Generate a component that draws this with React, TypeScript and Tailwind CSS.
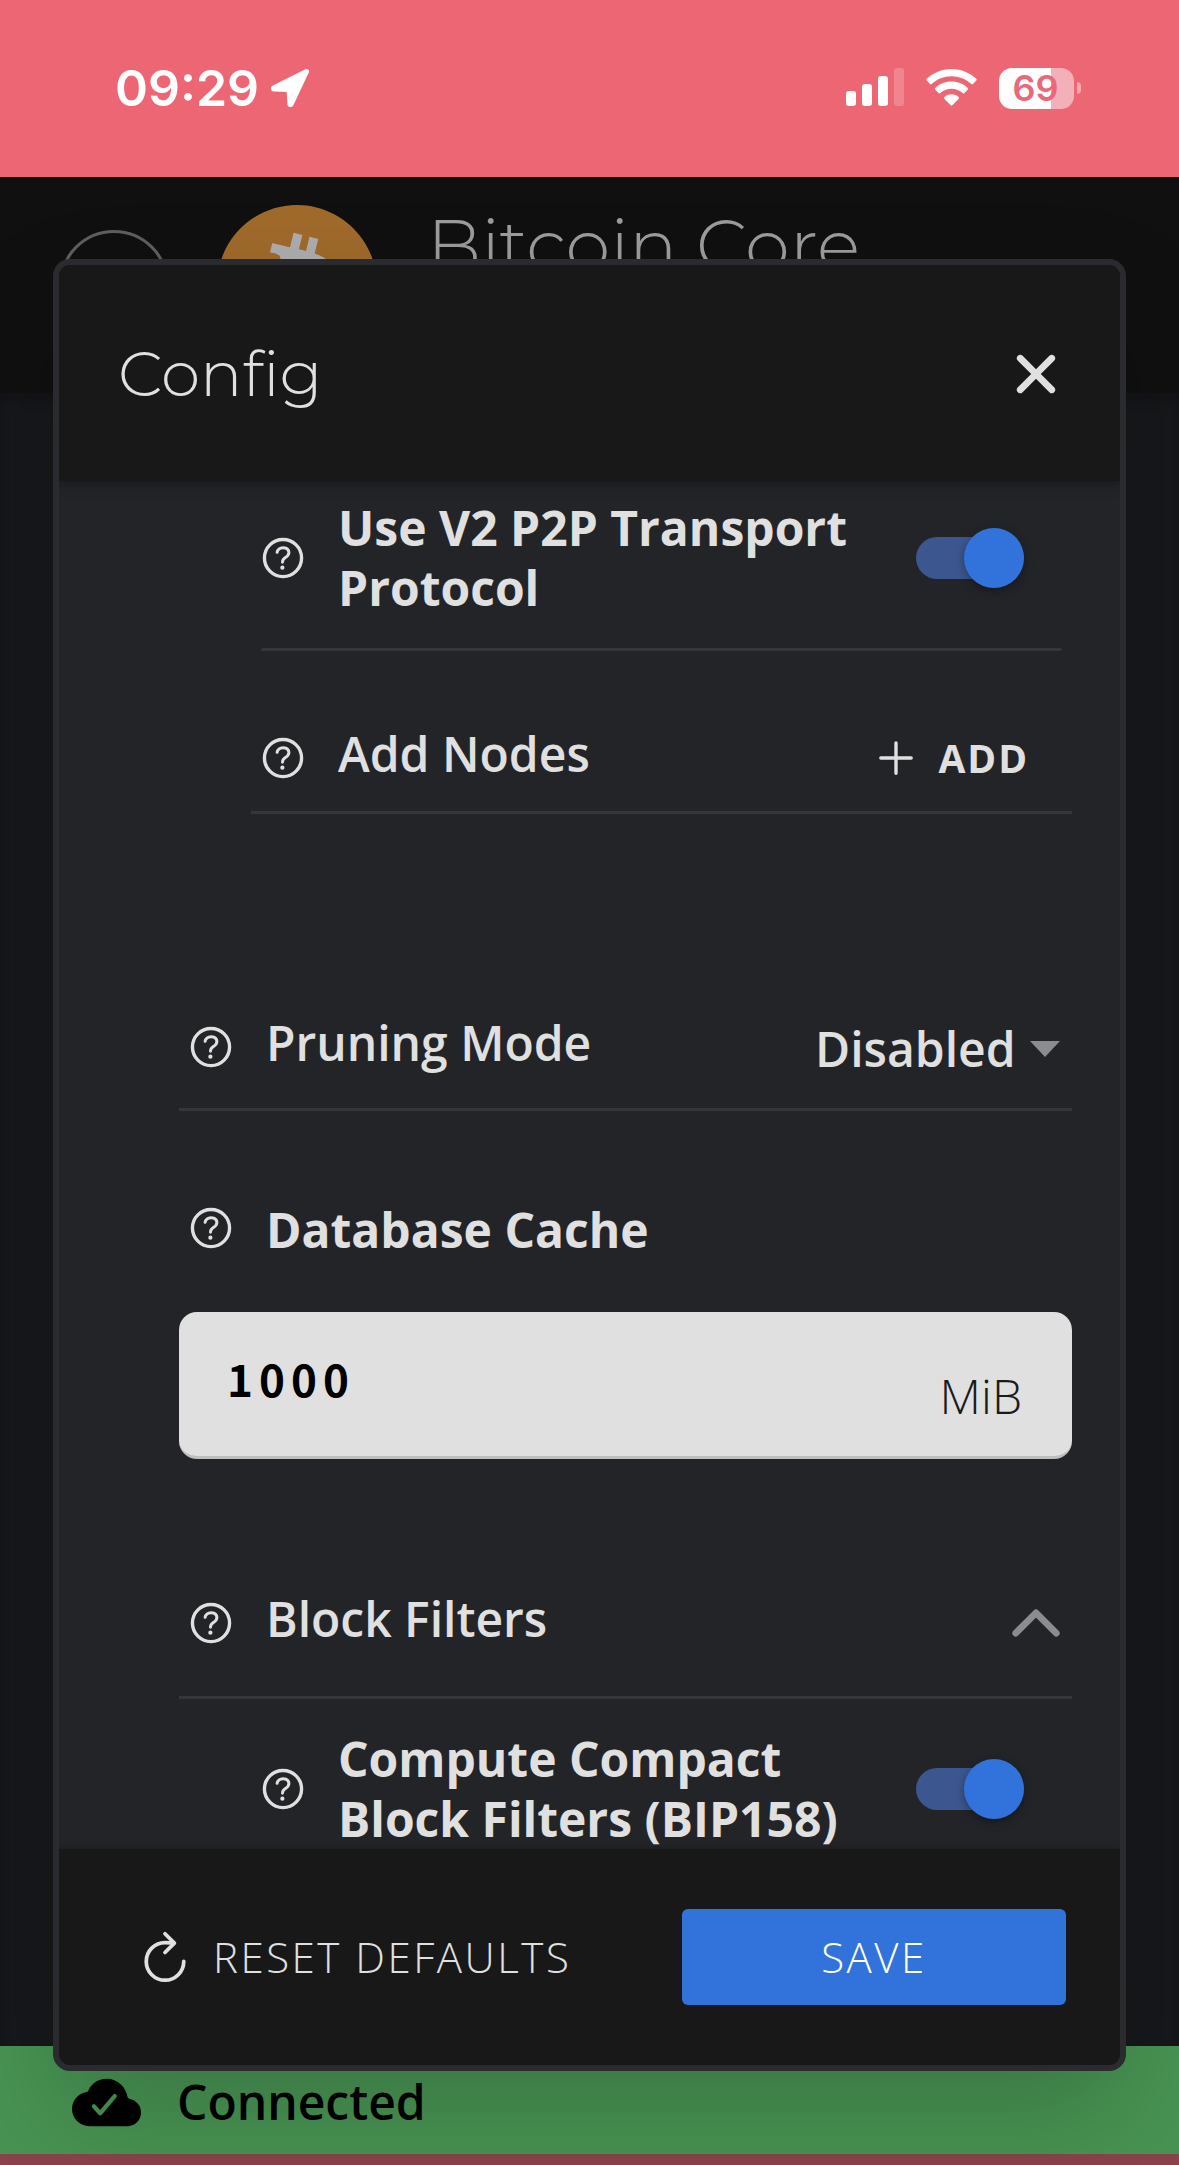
import { useState, type ReactNode } from "react";
import {
  IoAdd,
  IoChevronUp,
  IoClose,
  IoCloudDone,
  IoHelpCircleOutline,
  IoRefreshOutline,
} from "react-icons/io5";
import { SiBitcoin } from "react-icons/si";

function StatusBar() {
  return (
    <div className="flex h-[177px] shrink-0 items-start justify-between bg-[#ed6673] pt-[60px] pr-[98px] pl-[115px] text-white">
      <div className="flex h-14 items-center gap-[11px]">
        <span className="font-['Inter',sans-serif] text-[50px] leading-[56px] font-semibold">09:29</span>
        <svg className="size-10" viewBox="0 0 40 40" fill="currentColor" stroke="currentColor" strokeWidth="5" strokeLinejoin="round" aria-hidden="true">
          <path d="M36.500 3.500 L3.500 20 L3.500 21 L19 21.500 L20 36.500 L21 36.500 Z" />
        </svg>
      </div>
      <div className="flex h-14 items-center gap-[22px]">
        <svg className="h-10 w-[58px]" viewBox="0 0 58 40" fill="currentColor" aria-hidden="true">
          <rect x="0" y="23" width="10" height="15" rx="3" />
          <rect x="16" y="16" width="10" height="22" rx="3" />
          <rect x="32" y="8" width="10" height="30" rx="3" />
          <rect x="48" y="0" width="10" height="38" rx="3" opacity="0.2" />
        </svg>
        <svg className="h-10 w-[51px]" viewBox="0 0 51 40" fill="currentColor" aria-hidden="true">
          <path d="M25.500 1 C35.500 1 44 5 50.300 10.800 Q51.200 11.700 50.300 12.600 L47 15.900 Q46.200 16.700 45.300 15.900 C40 11 33 8.200 25.500 8.200 C18 8.200 11 11 5.700 15.900 Q4.800 16.700 4 15.900 L.7 12.600 Q-.2 11.700 .7 10.800 C7 5 15.500 1 25.500 1Z" />
          <path d="M25.500 13.500 C31.800 13.500 37.500 15.900 41.800 19.900 Q42.700 20.700 41.800 21.600 L38.400 25 Q37.600 25.800 36.700 25 C33.700 22.300 29.800 20.700 25.500 20.700 C21.200 20.700 17.300 22.300 14.300 25 Q13.400 25.800 12.600 25 L9.200 21.600 Q8.300 20.700 9.200 19.900 C13.500 15.900 19.200 13.500 25.500 13.500Z" />
          <path d="M25.500 26.300 C28.300 26.300 30.800 27.300 32.700 29 Q33.600 29.800 32.700 30.700 L26.300 37.300 Q25.500 38.100 24.700 37.300 L18.300 30.700 Q17.400 29.800 18.300 29 C20.200 27.300 22.700 26.300 25.500 26.300Z" />
        </svg>
        <div className="flex items-center gap-[3px]">
          <div className="flex h-[41px] w-[75px] items-center justify-center rounded-[13px] bg-linear-to-r from-white from-69% to-[#f3b0b8] to-69% pr-0.5 font-['Inter',sans-serif] text-[36px] leading-none font-semibold text-[#e8697a]">
            69
          </div>
          <div className="h-3 w-1 rounded-r-full bg-[#f5a8b0]" />
        </div>
      </div>
    </div>
  );
}

function AppHeader() {
  return (
    <header className="flex h-[216px] shrink-0 items-center bg-[#101010] pl-[59px]">
      <div className="size-[110px] rounded-full border-[3px] border-[#5f5f5f]" />
      <div className="ml-12 grid size-40 place-items-center">
        <div className="col-start-1 row-start-1 size-32 rounded-full bg-[#adadad]" />
        <SiBitcoin className="col-start-1 row-start-1 size-40 text-[#a06a2b]" />
      </div>
      <h1 className="ml-[50px] pb-20 font-['Montserrat','Lato',sans-serif] text-[72px] leading-[76px] font-light text-[#9c9c9c]">
        Bitcoin Core
      </h1>
    </header>
  );
}

function Help({ topic }: { topic: string }) {
  return (
    <button type="button" aria-label={`About ${topic}`} className="shrink-0">
      <IoHelpCircleOutline className="size-[54px]" />
    </button>
  );
}

function Divider() {
  return <div className="h-[3px] bg-[#353638]" />;
}

function ToggleRow({ id, label }: { id: string; label: string }) {
  const [on, setOn] = useState(true);
  return (
    <div className="pl-[72px]">
      <div className="flex items-center pt-[30px] pr-12 pb-[30px] pl-[5px]">
        <Help topic={label} />
        <label htmlFor={id} className="ml-7 flex-1 font-bold">
          {label}
        </label>
        <input
          id={id}
          type="checkbox"
          role="switch"
          checked={on}
          onChange={(e) => setOn(e.target.checked)}
          className="ml-6 flex h-[42px] w-[108px] shrink-0 appearance-none items-center rounded-full bg-[#55575c] before:size-[60px] before:shrink-0 before:rounded-full before:bg-[#a0a2a6] before:shadow-[0_3px_10px_rgba(0,0,0,0.35)] checked:justify-end checked:bg-[#3c578f] checked:before:bg-[#3273db]"
        />
      </div>
      <div className="mx-[10px] h-[3px] rounded-full bg-[#353638]" />
    </div>
  );
}

function Row({ className, children }: { className: string; children: ReactNode }) {
  return <div className={`flex items-center pl-[5px] ${className}`}>{children}</div>;
}

function ConfigDialog() {
  const [cache, setCache] = useState("1000");
  return (
    <section
      role="dialog"
      aria-labelledby="config-title"
      className="absolute inset-x-[53px] top-[259px] bottom-[94px] flex flex-col overflow-hidden rounded-[17px] border-[6px] border-[#2a2b2f] bg-[#232428] text-[#e0e0e0] shadow-[0_50px_110px_rgba(0,0,0,0.18)]"
    >
      <header className="z-10 flex h-[216px] shrink-0 items-center justify-between bg-[#181818] pr-12 pl-[59px] shadow-[0_3px_12px_rgba(0,0,0,0.35)]">
        <h2 id="config-title" className="font-['Montserrat','Lato',sans-serif] text-[63px] leading-none font-light">
          Config
        </h2>
        <button type="button" aria-label="Close" className="pt-0.5">
          <IoClose className="size-[72px]" />
        </button>
      </header>

      <form
        id="config-form"
        className="min-h-0 flex-1 overflow-hidden pr-12 pl-[120px] text-[48px] leading-[60px]"
        onSubmit={(e) => e.preventDefault()}
      >
        <div className="-mt-[13px]">
          <ToggleRow id="v2transport" label="Use V2 P2P Transport Protocol" />
        </div>

        <div className="pt-[54px] pl-[72px]">
          <Row className="h-[106px] pr-[43px]">
            <Help topic="Add Nodes" />
            <span className="ml-7 flex-1 pb-2 font-semibold">Add Nodes</span>
            <button type="button" className="flex items-center gap-4 text-[39px] font-bold tracking-wider">
              <IoAdd className="size-[54px]" />
              ADD
            </button>
          </Row>
          <Divider />
        </div>

        <div className="pt-[172px]">
          <Row className="h-[122px] pr-3">
            <Help topic="Pruning Mode" />
            <label htmlFor="pruning" className="ml-7 flex-1 pb-2 font-semibold">
              Pruning Mode
            </label>
            <div className="flex items-center gap-3.5 pt-1">
              <select id="pruning" className="appearance-none bg-transparent font-semibold" defaultValue="disabled">
                <option value="disabled">Disabled</option>
              </select>
              <svg className="h-4 w-[30px]" viewBox="0 0 30 16" fill="#8b8c8f" aria-hidden="true">
                <path d="M0 0 H30 L15 16 Z" />
              </svg>
            </div>
          </Row>
          <Divider />
        </div>

        <div className="pt-[87px]">
          <Row className="h-[60px]">
            <Help topic="Database Cache" />
            <label htmlFor="dbcache" className="ml-7 pt-1 font-bold">
              Database Cache
            </label>
          </Row>
          <div className="mt-[54px] flex h-[147px] items-center rounded-[18px] border-b-[3px] border-[#bdbfbf] bg-[#e0e0e0] pr-[50px] pl-12">
            <input
              id="dbcache"
              inputMode="numeric"
              value={cache}
              onChange={(e) => setCache(e.target.value)}
              className="min-w-0 flex-1 bg-transparent pb-3 font-['Noto_Sans_CJK_SC',sans-serif] text-[44px] font-bold tracking-[6px] text-black outline-none"
            />
            <span className="pt-6 font-light text-[#1a1a1a]">MiB</span>
          </div>
        </div>

        <div className="pt-[91px]">
          <Row className="h-[146px]">
            <Help topic="Block Filters" />
            <span className="ml-7 flex-1 pb-2 font-semibold">Block Filters</span>
            <button type="button" aria-label="Collapse Block Filters" aria-expanded="true" className="text-[#8b8c8f]">
              <IoChevronUp className="size-[72px]" />
            </button>
          </Row>
          <Divider />
        </div>

        <ToggleRow id="blockfilters" label="Compute Compact Block Filters (BIP158)" />
      </form>

      <footer className="z-10 flex h-[216px] shrink-0 items-center justify-between bg-[#181818] pr-[54px] pl-[76px] text-[42px] leading-[60px] font-light tracking-[0.06em] shadow-[0_0_6px_rgba(0,0,0,0.3)]">
        <button type="reset" form="config-form" className="flex items-center gap-[18px]">
          <IoRefreshOutline className="size-[60px]" />
          RESET DEFAULTS
        </button>
        <button type="submit" form="config-form" className="h-24 w-96 rounded-md bg-[#3273db] text-white">
          SAVE
        </button>
      </footer>
    </section>
  );
}

export default function App() {
  return (
    <div className="relative flex min-h-screen flex-col overflow-hidden bg-[#17181b] font-['Open_Sans',sans-serif]">
      <StatusBar />
      <AppHeader />
      <main className="flex-1 shadow-[inset_0_8px_12px_rgba(0,0,0,0.2)]" />
      <footer className="flex h-[108px] shrink-0 items-center gap-9 bg-[#489453] pt-1 pl-[72px] text-black">
        <IoCloudDone className="size-[69px]" />
        <span className="text-[48px] leading-[60px] font-semibold">Connected</span>
      </footer>
      <div className="h-[11px] shrink-0 bg-[#8c434b]" />
      <ConfigDialog />
    </div>
  );
}
